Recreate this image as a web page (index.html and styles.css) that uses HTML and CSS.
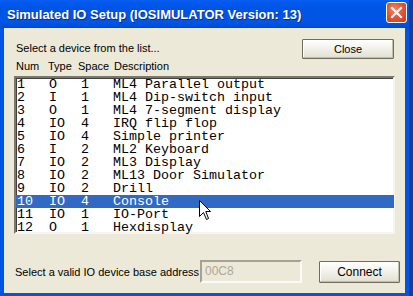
FILE: index.html
```html
<!DOCTYPE html>
<html>
<head>
<meta charset="utf-8">
<link rel="stylesheet" href="styles.css">
</head>
<body>
<div class="window">
  <div class="titlebar">
    <span class="title">Simulated IO Setup (IOSIMULATOR Version: 13)</span>
    <span class="close-x">
      <svg width="21" height="21" viewBox="0 0 21 21">
        <path d="M6 6 L15 15 M15 6 L6 15" stroke="#fff" stroke-width="2.2" stroke-linecap="square"/>
      </svg>
    </span>
  </div>
  <div class="frame">
    <div class="client">
      <div class="top">
        <div class="top-left">
          <div class="label">Select a device from the list...</div>
          <div class="header">
            <span class="h-num">Num</span><span class="h-type">Type</span><span class="h-space">Space</span><span>Description</span>
          </div>
        </div>
        <button class="btn btn-close">Close</button>
      </div>
      <div class="list">
        <div class="row"><span>1</span><span>O</span><span>1</span><span>ML4 Parallel output</span></div>
        <div class="row"><span>2</span><span>I</span><span>1</span><span>ML4 Dip-switch input</span></div>
        <div class="row"><span>3</span><span>O</span><span>1</span><span>ML4 7-segment display</span></div>
        <div class="row"><span>4</span><span>IO</span><span>4</span><span>IRQ flip flop</span></div>
        <div class="row"><span>5</span><span>IO</span><span>4</span><span>Simple printer</span></div>
        <div class="row"><span>6</span><span>I</span><span>2</span><span>ML2 Keyboard</span></div>
        <div class="row"><span>7</span><span>IO</span><span>2</span><span>ML3 Display</span></div>
        <div class="row"><span>8</span><span>IO</span><span>2</span><span>ML13 Door Simulator</span></div>
        <div class="row"><span>9</span><span>IO</span><span>2</span><span>Drill</span></div>
        <div class="row selected"><span>10</span><span>IO</span><span>4</span><span>Console</span></div>
        <div class="row"><span>11</span><span>IO</span><span>1</span><span>IO-Port</span></div>
        <div class="row"><span>12</span><span>O</span><span>1</span><span>Hexdisplay</span></div>
      </div>
      <div class="bottom">
        <span class="label addr-label">Select a valid IO device base address</span>
        <div class="addr-input">00C8</div>
        <button class="btn btn-connect">Connect</button>
      </div>
    </div>
  </div>
</div>
<svg class="cursor" width="13" height="21" viewBox="0 0 13 21">
  <path d="M0.5 0.5 L0.5 16.5 L4.5 12.5 L7.5 19.5 L9.5 18.5 L6.8 11.5 L11.5 11.5 Z" fill="#fff" stroke="#000" stroke-width="1"/>
</svg>
</body>
</html>
```
FILE: styles.css
```css
html, body {
  margin: 0;
  padding: 0;
}
body {
  width: 413px;
  height: 296px;
  overflow: hidden;
  background: #1f3a8f;
  position: relative;
  font-family: "Liberation Sans", Arial, sans-serif;
}
.window {
  width: 409px;
  height: 296px;
  display: flex;
  flex-direction: column;
}
.titlebar {
  height: 28px;
  flex: none;
  box-sizing: border-box;
  background: linear-gradient(to bottom, #0a5ef0 0%, #0058ee 12%, #0054e3 30%, #0055e5 80%, #0048d6 100%);
  display: flex;
  align-items: center;
  justify-content: space-between;
  padding: 0 2px 0 7px;
}
.title {
  color: #fff;
  font-weight: bold;
  font-size: 13px;
  letter-spacing: 0;
  text-shadow: 1px 1px 0 #0a2d8c;
  margin-top: 1px;
}
.close-x {
  width: 21px;
  height: 21px;
  box-sizing: border-box;
  border: 1px solid #fff;
  border-radius: 3px;
  background: radial-gradient(circle at 40% 35%, #ee8a6e 0%, #e0583a 45%, #c93b1c 100%);
  display: block;
  margin-top: -3px;
}
.close-x svg {
  display: block;
  margin: -1px;
}
.frame {
  flex: 1;
  background: #0054e3;
  padding: 0 4px 3px 4px;
  display: flex;
}
.client {
  flex: 1;
  background: #ece9d8;
  padding: 11px 0 0 10px;
}
.top {
  width: 381px;
  height: 37px;
  display: flex;
  justify-content: space-between;
  align-items: flex-start;
}
.top-left {
  padding-top: 2px;
  padding-left: 2px;
}
.label {
  font-size: 11px;
  line-height: 14px;
  color: #000;
}
.header {
  font-size: 11px;
  line-height: 14px;
  margin-top: 4px;
  display: flex;
}
.h-num { width: 32px; }
.h-type { width: 30px; }
.h-space { width: 36px; }
.btn {
  font-family: "Liberation Sans", Arial, sans-serif;
  font-size: 11px;
  color: #000;
  border: 1px solid #6f6c60;
  border-radius: 1px;
  background: linear-gradient(to bottom, #ffffff 0%, #f4f3ee 40%, #e6e3d6 90%, #d6d2c2 100%);
  box-shadow: inset -1px -1px 0 #c3bfae, inset 1px 1px 0 #fff;
  padding: 0;
  margin: 0;
}
.btn-close {
  width: 92px;
  height: 20px;
  margin-right: 1px;
}
.list {
  width: 381px;
  height: 158px;
  box-sizing: border-box;
  background: #fff;
  border-style: solid;
  border-width: 2px;
  border-color: #7a7868 #f6f5f0 #f6f5f0 #7a7868;
  box-shadow: inset 1px 1px 0 #404040;
  font-family: "Liberation Mono", "Courier New", monospace;
  font-size: 13.33px;
}
.row {
  height: 13px;
  line-height: 13px;
  display: grid;
  grid-template-columns: 32px 32px 32px 1fr;
  padding-left: 1px;
  white-space: pre;
  color: #000;
}
.row.selected {
  background: #316ac5;
  color: #fff;
  margin-right: -1px;
}
.bottom {
  margin-top: 26px;
  display: flex;
  align-items: center;
  height: 23px;
}
.addr-label {
  width: 185px;
  padding-left: 1px;
}
.addr-input {
  width: 102px;
  height: 23px;
  box-sizing: border-box;
  border-style: solid;
  border-width: 2px;
  border-color: #a5a293 #fbfaf6 #fbfaf6 #a5a293;
  color: #aca899;
  font-size: 12px;
  line-height: 19px;
  padding-left: 3px;
  background: #ece9d8;
}
.btn-connect {
  width: 81px;
  height: 22px;
  margin-left: 17px;
  font-size: 12px;
}
.cursor {
  position: absolute;
  left: 199px;
  top: 200px;
}
```
